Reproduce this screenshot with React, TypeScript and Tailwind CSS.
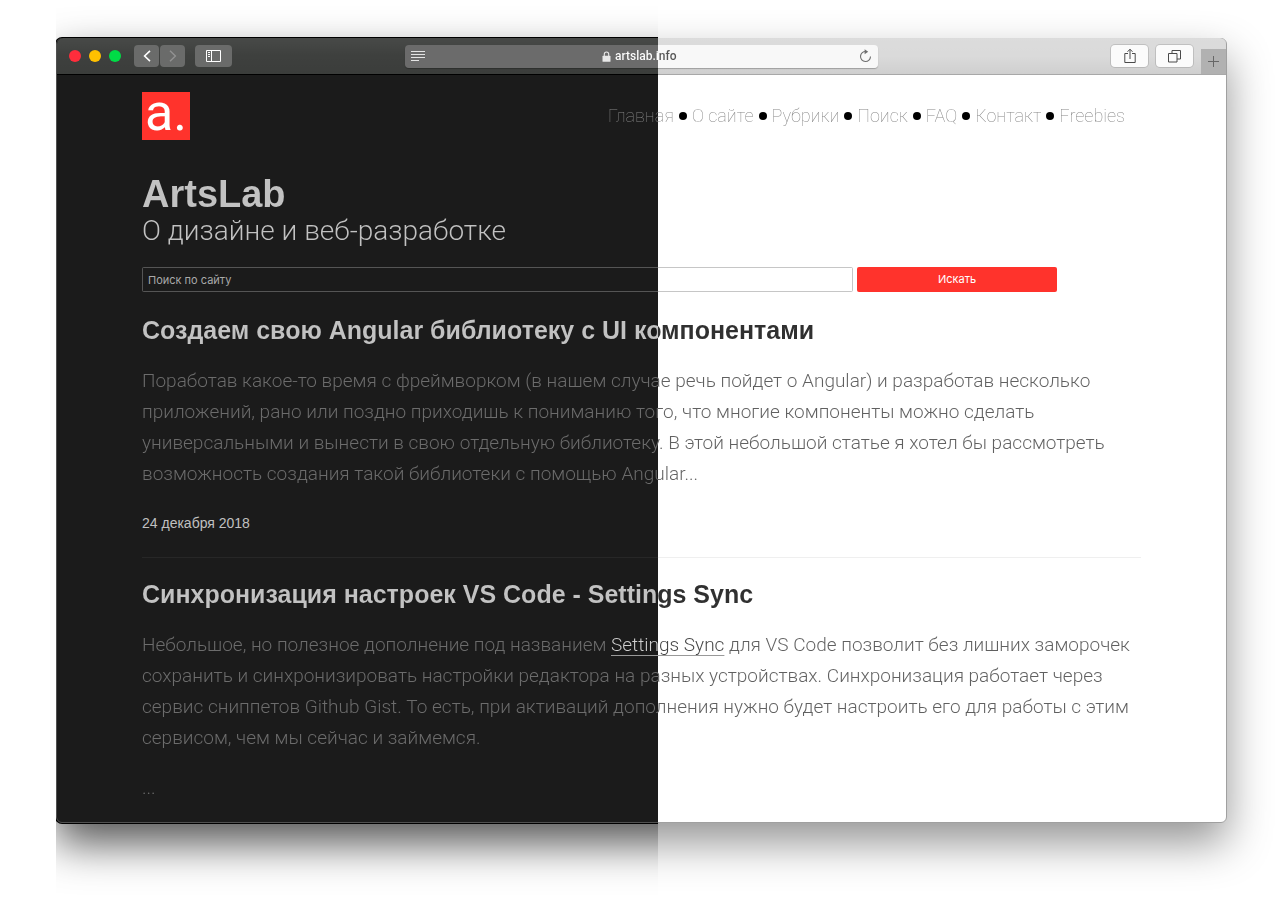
import React from "react";

const ink = "bg-fixed bg-clip-text bg-no-repeat text-transparent";
const headingInk =
  "bg-[linear-gradient(to_right,#c2c2c2_var(--split),#303030_var(--split))]";
const bodyInk =
  "bg-[linear-gradient(to_right,#6c6c6c_var(--split),#606060_var(--split))]";
const navInk =
  "bg-[linear-gradient(to_right,#8c8c8c_var(--split),#808080_var(--split))]";
const linkInk =
  "bg-[linear-gradient(to_right,#d0d0d0_var(--split),#444444_var(--split))]";

const navItems = ["Главная", "О сайте", "Рубрики", "Поиск", "FAQ", "Контакт", "Freebies"];

function Backdrop() {
  return (
    <div aria-hidden="true" className="absolute inset-0 -z-10">
      <div className="absolute inset-0 rounded-md border border-[#a0a0a0] bg-white shadow-[0_20px_44px_rgba(0,0,0,0.42)] [clip-path:inset(-100px_-100px_-100px_calc(var(--split)-56px))]" />
      <div className="absolute inset-0 rounded-md border border-[#505050] bg-[#1b1b1b] shadow-[0_0_0_1px_#000,0_20px_44px_rgba(0,0,0,0.68)] [clip-path:inset(-100px_calc(100%-var(--split)+56px)_-100px_-100px)]" />
    </div>
  );
}

function Toolbar() {
  return (
    <header className="mx-px mt-px rounded-t-md bg-[linear-gradient(to_right,#000000_var(--split),#a8a8a8_var(--split))] bg-fixed pb-px">
      <div className="rounded-t-md bg-[linear-gradient(to_right,#3e403e_var(--split),#dadada_var(--split))] bg-fixed">
        <div className="flex h-9 items-center rounded-t-md bg-linear-to-b from-white/5 via-transparent to-black/5">
          <div className="flex flex-1 items-center">
            <div className="ml-3 flex gap-2">
              <button aria-label="Закрыть" className="size-3 rounded-full bg-[#ff2d3c]" />
              <button aria-label="Свернуть" className="size-3 rounded-full bg-[#ffc000]" />
              <button aria-label="Развернуть" className="size-3 rounded-full bg-[#00dc46]" />
            </div>
            <div className="ml-[13px] flex gap-px">
              <button aria-label="Назад" className="grid h-[22px] w-[25px] place-items-center rounded bg-[#6a6b6a] text-white">
                <svg width="8" height="12" viewBox="0 0 8 12" fill="none" stroke="currentColor" strokeWidth="1.6">
                  <path d="M7 .8 1.6 6 7 11.2" />
                </svg>
              </button>
              <button aria-label="Вперёд" className="grid h-[22px] w-[25px] place-items-center rounded bg-[#6a6b6a] text-[#929292]">
                <svg width="8" height="12" viewBox="0 0 8 12" fill="none" stroke="currentColor" strokeWidth="1.4">
                  <path d="M1 .8 6.4 6 1 11.2" />
                </svg>
              </button>
            </div>
            <button aria-label="Боковая панель" className="ml-[10px] grid h-[22px] w-[37px] place-items-center rounded bg-[#6a6b6a] text-white">
              <svg width="15" height="12" viewBox="0 0 15 12" fill="none" stroke="currentColor">
                <path d="M.5 .5h14v11H.5zM5.5 .5v11M2 2.5h2M2 4.5h2M2 6.5h2" />
              </svg>
            </button>
          </div>
          <div className="flex h-[23px] w-[473px] items-center justify-between rounded bg-[linear-gradient(to_right,#6b6b6b_var(--split),#f8f8f8_var(--split))] bg-fixed px-[6px] shadow-[0_1px_1px_rgba(0,0,0,0.25)]">
            <button aria-label="Режим чтения" className="text-[#e4e4e4]">
              <svg width="15" height="11" viewBox="0 0 15 11" fill="none" stroke="currentColor">
                <path d="M0 .5h14M0 3.5h14M0 6.5h14M0 9.5h8" />
              </svg>
            </button>
            <label className="flex items-center gap-1">
              <svg width="9" height="11" viewBox="0 0 9 11" aria-label="Адрес сайта">
                <path d="M2.3 5V3.2a2.2 2.2 0 0 1 4.4 0V5" fill="none" stroke="#e8e8e8" strokeWidth="1.1" />
                <rect x=".5" y="4.8" width="8" height="6" rx=".6" fill="#e8e8e8" />
              </svg>
              <input
                defaultValue="artslab.info"
                className="w-[68px] bg-[linear-gradient(to_right,#ffffff_var(--split),#555555_var(--split))] bg-fixed bg-clip-text font-[Roboto,sans-serif] text-xs font-medium [-webkit-text-fill-color:transparent]"
              />
            </label>
            <button aria-label="Обновить" className="text-[#6e6e6e]">
              <svg width="13" height="14" viewBox="0 0 13 14" fill="none" stroke="currentColor" strokeWidth="1.1">
                <path d="M7 2.5A5 5 0 1 0 11.5 7.5" />
                <path d="M5.6 .2 9.2 2.7 5.6 5.2z" fill="currentColor" stroke="none" />
              </svg>
            </button>
          </div>
          <div className="flex flex-1 items-center justify-end gap-2 self-stretch text-[#4a4a4a]">
            <button aria-label="Поделиться" className="grid h-[22px] w-[37px] place-items-center rounded bg-[#fbfbfb] shadow-[0_0_0_1px_rgba(0,0,0,0.12)]">
              <svg width="12" height="16" viewBox="0 0 12 16" fill="none" stroke="currentColor">
                <path d="M4 5.5H.8v9h10.4v-9H8M6 11V1.5M3.5 3.8 6 1.2l2.5 2.6" />
              </svg>
            </button>
            <button aria-label="Показать вкладки" className="grid h-[22px] w-[37px] place-items-center rounded bg-[#fbfbfb] shadow-[0_0_0_1px_rgba(0,0,0,0.12)]">
              <svg width="13" height="13" viewBox="0 0 13 13" fill="none" stroke="currentColor">
                <path d="M.5 3.5H9V12H.5zM4 3.5V.5h8.500V9H9" />
              </svg>
            </button>
            <button aria-label="Новая вкладка" className="grid h-[25px] w-[25px] place-items-center self-end bg-[#b1b1b1] text-[#666]">
              <svg width="11" height="11" viewBox="0 0 11 11" fill="none" stroke="currentColor">
                <path d="M5.5 0v11M0 5.5h11" />
              </svg>
            </button>
          </div>
        </div>
      </div>
    </header>
  );
}

function SiteHeader() {
  return (
    <div className="flex items-start justify-between pt-[17px] pr-4">
      <a href="#" className="flex size-12 justify-center bg-[#ff332c] font-[Roboto,sans-serif] text-[52px] leading-[42px] text-white">
        a.
      </a>
      <nav className="pt-3">
        <ul className="flex items-center gap-[5px] font-[Roboto,sans-serif] text-lg leading-6 font-thin">
          {navItems.map((item, i) => (
            <li key={item} className="flex items-center gap-[5px]">
              {i > 0 && <span className="size-2 rounded-full bg-black" />}
              <a href="#" className={`${ink} ${navInk}`}>{item}</a>
            </li>
          ))}
        </ul>
      </nav>
    </div>
  );
}

function SearchForm() {
  return (
    <form className="mt-5 flex w-[915px] max-w-full gap-1" onSubmit={(e) => e.preventDefault()}>
      <div className="flex flex-1 rounded-xs bg-[linear-gradient(to_right,#555555_var(--split),#c6c6c6_var(--split))] bg-fixed p-px">
        <input
          aria-label="Поиск по сайту"
          placeholder="Поиск по сайту"
          className="h-[23px] w-full bg-[linear-gradient(to_right,#1b1b1b_var(--split),#ffffff_var(--split))] bg-fixed px-[5px] text-[11px] text-[#aaa] outline-none placeholder:text-[#a9a9a9]"
        />
      </div>
      <button className="w-[200px] rounded-xs bg-[#ff332c] text-[11px] text-white">Искать</button>
    </form>
  );
}

function Title({ children }: { children: React.ReactNode }) {
  return (
    <h2 className={`font-['Liberation_Sans',sans-serif] text-[25px] leading-8 font-bold ${ink} ${headingInk}`}>
      {children}
    </h2>
  );
}

function Body({ children }: { children: React.ReactNode }) {
  return (
    <p className="mt-[19px] font-[Roboto,sans-serif] text-[19px] leading-[31px] font-light">
      {children}
    </p>
  );
}

function Copy({ children }: { children: React.ReactNode }) {
  return <span className={`${ink} ${bodyInk}`}>{children}</span>;
}

export default function App() {
  return (
    <div className="ml-14 min-h-screen overflow-hidden bg-white pt-[37px] pb-[73px] font-[Inter,sans-serif] [--split:calc((100vw+33px)/2)]">
      <div className="relative isolate mr-14">
        <Backdrop />
        <Toolbar />
        <main className="px-[86px] pb-5">
          <SiteHeader />
          <h1 className={`mt-[33px] font-['Liberation_Sans',sans-serif] text-[38px] leading-[42px] font-bold ${ink} ${headingInk}`}>ArtsLab</h1>
          <p className={`font-[Roboto,sans-serif] text-[28px] leading-8 font-light ${ink} ${headingInk}`}>О дизайне и веб-разработке</p>
          <SearchForm />
          <article className="mt-[22px] border-b border-[#80808020] pb-6">
            <Title>Создаем свою Angular библиотеку с UI компонентами</Title>
            <Body>
              <Copy>
                Поработав какое-то время с фреймворком (в нашем случае речь пойдет о Angular) и разработав несколько
                приложений, рано или поздно приходишь к пониманию того, что многие компоненты можно сделать
                универсальными и вынести в свою отдельную библиотеку. В этой небольшой статье я хотел бы рассмотреть
                возможность создания такой библиотеки с помощью Angular...
              </Copy>
            </Body>
            <time dateTime="2018-12-24" className="mt-6 block font-['Liberation_Sans',sans-serif] text-sm text-[#c0c0c0]">
              24 декабря 2018
            </time>
          </article>
          <article className="mt-5">
            <Title>Синхронизация настроек VS Code - Settings Sync</Title>
            <Body>
              <Copy>Небольшое, но полезное дополнение под названием </Copy>
              <a href="#" className={`underline decoration-[#999] decoration-1 underline-offset-4 ${ink} ${linkInk}`}>Settings Sync</a>
              <Copy>
                {" "}для VS Code позволит без лишних заморочек
                сохранить и синхронизировать настройки редактора на разных устройствах. Синхронизация работает через
                сервис сниппетов Github Gist. То есть, при активаций дополнения нужно будет настроить его для работы с этим
                сервисом, чем мы сейчас и займемся.
              </Copy>
            </Body>
            <Body>
              <Copy>...</Copy>
            </Body>
          </article>
        </main>
      </div>
    </div>
  );
}
